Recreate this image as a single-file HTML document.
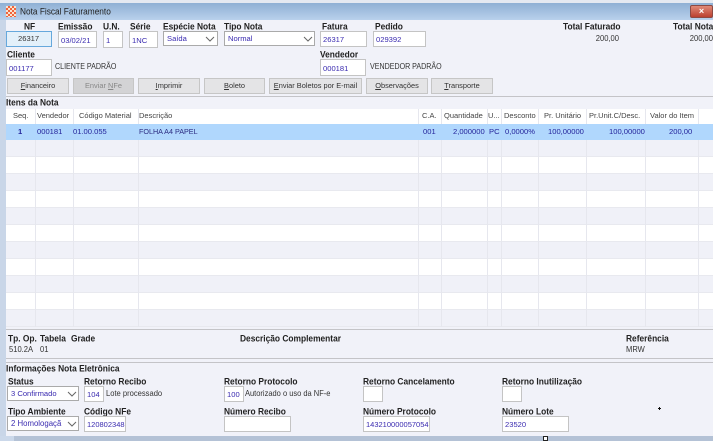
<!DOCTYPE html>
<html lang="pt">
<head>
<meta charset="utf-8">
<title>Nota Fiscal Faturamento</title>
<style>
html,body{margin:0;padding:0}
body{width:713px;height:441px;overflow:hidden;position:relative;background:#c9d6e8;font-family:"Liberation Sans",sans-serif;font-size:8px;color:#222}
div,span{position:absolute;white-space:nowrap;box-sizing:border-box}
.l{font-weight:bold;font-size:8.4px;line-height:12px;color:#222;transform:scaleY(1.1)}
.t{font-size:7.6px;line-height:12px;color:#333;transform:scaleY(1.1)}
.i{background:#fff;border:1px solid #c4c4c4;color:#3a2bb0;font-size:7.6px;line-height:15px;padding-left:2px;overflow:hidden}
.b{background:#e4e4e6;border:1px solid #c6c6c6;text-align:center;font-size:7.4px;line-height:14px;color:#333;height:16px;top:78px}
.h{top:109px;height:15px;font-size:7.5px;line-height:14px;color:#444}
.c{top:124px;height:16px;font-size:7.6px;line-height:16px;color:#23239a}
.v{top:109px;width:1px;height:218px;background:#e6e7ee}
.r{left:6px;width:707px;height:17px;border-bottom:1px solid #e8e9ef}
u{text-decoration:underline}
</style>
</head>
<body>
<div style="left:0;top:0;width:713px;height:3px;background:#e4e9f1"></div>
<div style="left:0;top:3px;width:713px;height:17px;background:linear-gradient(#8fb0d4,#b9d1ec)"></div>
<div style="left:6px;top:6px;width:10px;height:11px;background:repeating-conic-gradient(#f0643c 0 25%,#f8e4d0 0 50%) 0 0/4px 4px"></div>
<div style="left:20px;top:5px;font-size:8.3px;line-height:13px;color:#222;transform:scaleY(1.1)">Nota Fiscal Faturamento</div>
<div style="left:690px;top:5px;width:23px;height:13px;background:linear-gradient(#e08a78,#bb4030);border:1px solid #8c4a44;border-radius:2px;color:#fff;text-align:center;font-size:9px;line-height:10px;font-weight:bold">×</div>

<div style="left:6px;top:20px;width:707px;height:416px;background:#f1f2f9"></div>

<div class="l" style="left:24px;top:20px">NF</div>
<div class="l" style="left:58px;top:20px">Emissão</div>
<div class="l" style="left:103px;top:20px">U.N.</div>
<div class="l" style="left:130px;top:20px">Série</div>
<div class="l" style="left:163px;top:20px">Espécie Nota</div>
<div class="l" style="left:224px;top:20px">Tipo Nota</div>
<div class="l" style="left:322px;top:20px">Fatura</div>
<div class="l" style="left:375px;top:20px">Pedido</div>
<div class="l" style="left:563px;top:20px">Total Faturado</div>
<div class="l" style="left:673px;top:20px">Total Nota</div>

<div class="i" style="left:6px;top:31px;width:46px;height:16px;background:#e3f0fa;border-color:#66a8dc;padding-left:11px;color:#333;line-height:13px">26317</div>
<div class="i" style="left:58px;top:31px;width:39px;height:17px;padding-top:1px">03/02/21</div>
<div class="i" style="left:103px;top:31px;width:20px;height:17px;padding-top:1px">1</div>
<div class="i" style="left:129px;top:31px;width:29px;height:17px;padding-top:1px">1NC</div>
<div class="i" style="left:163px;top:31px;width:55px;height:15px;border-color:#aaa;line-height:13px;padding-left:3px">Saída</div>
<svg style="position:absolute;left:205px;top:36px" width="10" height="6"><path d="M1 1l4 4 4-4" fill="none" stroke="#666"/></svg>
<div class="i" style="left:224px;top:31px;width:91px;height:15px;border-color:#aaa;line-height:13px;padding-left:3px">Normal</div>
<svg style="position:absolute;left:303px;top:36px" width="10" height="6"><path d="M1 1l4 4 4-4" fill="none" stroke="#666"/></svg>
<div class="i" style="left:320px;top:31px;width:47px;height:16px">26317</div>
<div class="i" style="left:373px;top:31px;width:53px;height:16px">029392</div>
<div class="t" style="left:595px;top:33px;width:24px;text-align:right">200,00</div>
<div class="t" style="left:688px;top:33px;width:25px;text-align:right">200,00</div>

<div class="l" style="left:7px;top:48px">Cliente</div>
<div class="l" style="left:320px;top:48px">Vendedor</div>
<div class="i" style="left:6px;top:59px;width:46px;height:17px;padding-top:1px">001177</div>
<div class="t" style="left:55px;top:61px;font-size:7.1px">CLIENTE PADRÃO</div>
<div class="i" style="left:320px;top:59px;width:46px;height:17px;padding-top:1px">000181</div>
<div class="t" style="left:370px;top:61px;font-size:7.1px">VENDEDOR PADRÃO</div>

<div class="b" style="left:7px;width:62px"><u>F</u>inanceiro</div>
<div class="b" style="left:73px;width:61px;background:#d3d3d5;color:#888">Enviar <u>N</u>Fe</div>
<div class="b" style="left:138px;width:62px"><u>I</u>mprimir</div>
<div class="b" style="left:204px;width:61px"><u>B</u>oleto</div>
<div class="b" style="left:269px;width:93px"><u>E</u>nviar Boletos por E-mail</div>
<div class="b" style="left:366px;width:62px"><u>O</u>bservações</div>
<div class="b" style="left:431px;width:62px"><u>T</u>ransporte</div>

<div style="left:6px;top:96px;width:707px;height:1px;background:#c4c4c8"></div>
<div class="l" style="left:6px;top:96px">Itens da Nota</div>

<div style="left:6px;top:109px;width:707px;height:218px;background:#fff"></div>
<div class="r" style="top:140px;background:#f0f1f8"></div>
<div class="r" style="top:157px"></div>
<div class="r" style="top:174px;background:#f0f1f8"></div>
<div class="r" style="top:191px"></div>
<div class="r" style="top:208px;background:#f0f1f8"></div>
<div class="r" style="top:225px"></div>
<div class="r" style="top:242px;background:#f0f1f8"></div>
<div class="r" style="top:259px"></div>
<div class="r" style="top:276px;background:#f0f1f8"></div>
<div class="r" style="top:293px"></div>
<div class="r" style="top:310px;background:#f0f1f8"></div>

<div class="v" style="left:35px"></div>
<div class="v" style="left:73px"></div>
<div class="v" style="left:138px"></div>
<div class="v" style="left:418px"></div>
<div class="v" style="left:441px"></div>
<div class="v" style="left:487px"></div>
<div class="v" style="left:501px"></div>
<div class="v" style="left:538px"></div>
<div class="v" style="left:586px"></div>
<div class="v" style="left:645px"></div>
<div class="v" style="left:698px"></div>

<div style="left:6px;top:124px;width:707px;height:16px;background:#b0d7fd"></div>

<div class="h" style="left:13px">Seq.</div>
<div class="h" style="left:37px">Vendedor</div>
<div class="h" style="left:79px">Código Material</div>
<div class="h" style="left:139px">Descrição</div>
<div class="h" style="left:422px">C.A.</div>
<div class="h" style="left:444px">Quantidade</div>
<div class="h" style="left:488px">U...</div>
<div class="h" style="left:504px">Desconto</div>
<div class="h" style="left:544px">Pr. Unitário</div>
<div class="h" style="left:589px">Pr.Unit.C/Desc.</div>
<div class="h" style="left:650px">Valor do Item</div>

<div class="c" style="left:18px;font-weight:bold">1</div>
<div class="c" style="left:37px">000181</div>
<div class="c" style="left:73px">01.00.055</div>
<div class="c" style="left:139px;color:#2a2a80;font-size:7.2px">FOLHA A4 PAPEL</div>
<div class="c" style="left:423px">001</div>
<div class="c" style="left:453px">2,000000</div>
<div class="c" style="left:489px">PC</div>
<div class="c" style="left:505px">0,0000%</div>
<div class="c" style="left:548px">100,00000</div>
<div class="c" style="left:609px">100,00000</div>
<div class="c" style="left:669px">200,00</div>

<div style="left:6px;top:329px;width:707px;height:1px;background:#c4c4c8"></div>
<div class="l" style="left:8px;top:332px">Tp. Op.</div>
<div class="l" style="left:40px;top:332px">Tabela</div>
<div class="l" style="left:71px;top:332px">Grade</div>
<div class="l" style="left:240px;top:332px">Descrição Complementar</div>
<div class="l" style="left:626px;top:332px">Referência</div>
<div class="t" style="left:9px;top:344px">510.2A</div>
<div class="t" style="left:40px;top:344px">01</div>
<div class="t" style="left:626px;top:344px">MRW</div>

<div style="left:6px;top:358px;width:707px;height:1px;background:#c4c4c8"></div>
<div style="left:6px;top:362px;width:707px;height:1px;background:#c4c4c8"></div>
<div class="l" style="left:6px;top:362px">Informações Nota Eletrônica</div>

<div class="l" style="left:8px;top:375px">Status</div>
<div class="l" style="left:84px;top:375px">Retorno Recibo</div>
<div class="l" style="left:224px;top:375px">Retorno Protocolo</div>
<div class="l" style="left:363px;top:375px">Retorno Cancelamento</div>
<div class="l" style="left:502px;top:375px">Retorno Inutilização</div>

<div class="i" style="left:7px;top:386px;width:72px;height:15px;border-color:#aaa;line-height:13px;padding-left:3px">3 Confirmado</div>
<svg style="position:absolute;left:67px;top:391px" width="10" height="6"><path d="M1 1l4 4 4-4" fill="none" stroke="#666"/></svg>
<div class="i" style="left:84px;top:386px;width:20px;height:16px">104</div>
<div class="t" style="left:106px;top:388px">Lote processado</div>
<div class="i" style="left:224px;top:386px;width:20px;height:16px">100</div>
<div class="t" style="left:245px;top:388px;font-size:7.5px">Autorizado o uso da NF-e</div>
<div class="i" style="left:363px;top:386px;width:20px;height:16px"></div>
<div class="i" style="left:502px;top:386px;width:20px;height:16px"></div>

<div class="l" style="left:8px;top:405px">Tipo Ambiente</div>
<div class="l" style="left:84px;top:405px">Código NFe</div>
<div class="l" style="left:224px;top:405px">Número Recibo</div>
<div class="l" style="left:363px;top:405px">Número Protocolo</div>
<div class="l" style="left:502px;top:405px">Número Lote</div>

<div class="i" style="left:7px;top:416px;width:72px;height:15px;border-color:#aaa;line-height:13px;padding-left:3px;font-size:7.8px">2 Homologaçã</div>
<div style="left:66px;top:417px;width:12px;height:13px;background:#fff"></div>
<svg style="position:absolute;left:67px;top:421px" width="10" height="6"><path d="M1 1l4 4 4-4" fill="none" stroke="#666"/></svg>
<div class="i" style="left:84px;top:416px;width:42px;height:16px;font-size:7.5px">120802348</div>
<div class="i" style="left:224px;top:416px;width:67px;height:16px"></div>
<div class="i" style="left:363px;top:416px;width:67px;height:16px;font-size:7.5px">143210000057054</div>
<div class="i" style="left:502px;top:416px;width:67px;height:16px">23520</div>

<div style="left:658px;top:408px;width:3px;height:1px;background:#111"></div>
<div style="left:659px;top:407px;width:1px;height:3px;background:#111"></div>

<div style="left:0;top:436px;width:713px;height:5px;background:#b4c2d6"></div>
<div style="left:0;top:436px;width:14px;height:5px;background:#cbd8ea"></div>
<div style="left:543px;top:436px;width:5px;height:5px;background:#fff;border:1px solid #222"></div>
</body>
</html>
